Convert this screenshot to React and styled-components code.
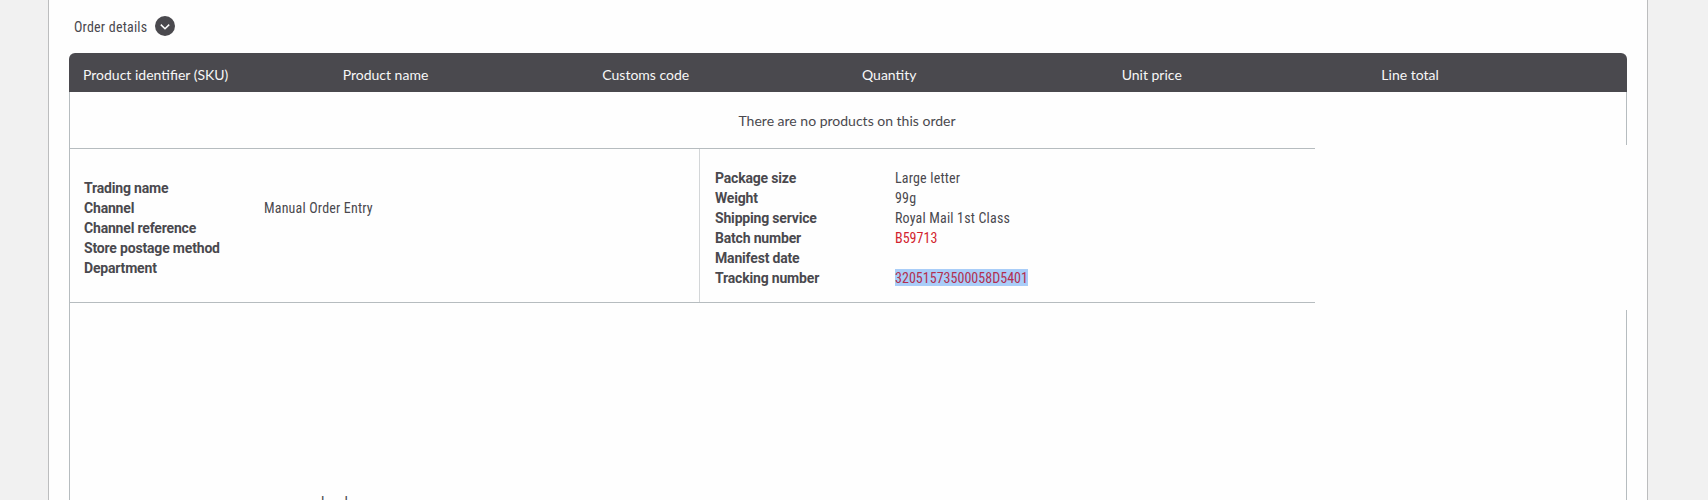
import React, { Component } from 'react';
import styled, { createGlobalStyle } from "styled-components";

const GlobalStyle = createGlobalStyle`
    body {
        margin: 0;
        background-color: #f1f1f1;
        overflow: hidden;
    }

    * {
        box-sizing: border-box;
    }
`;

const Page = styled.div`
    height: 500px;
    padding: 0 60px 0 48px;
    overflow: hidden;
    font-family: Roboto, "Liberation Sans", sans-serif;
    font-size: 14px;
    line-height: 20px;
    color: #4a494e;
`;

const Card = styled.div`
    height: 100%;
    padding: 16px 20px 0;
    display: flex;
    flex-direction: column;
    background-color: #fefefe;
    border-left: 1px solid #bcbdbe;
    border-right: 1px solid #bcbdbe;
`;

const Heading = styled.div`
    height: 37px;
    padding-left: 5px;
    display: flex;
    align-items: flex-start;
    gap: 8px;
`;

const HeadingText = styled.span`
    width: 73px;
    padding-top: 1px;
    font-stretch: condensed;
    letter-spacing: 0.2px;
    white-space: nowrap;
`;

const ToggleButton = styled.button`
    width: 20px;
    height: 20px;
    padding: 0;
    border: 0;
    border-radius: 50%;
    background-color: #4a494e;

    svg {
        display: block;
    }
`;

const TableHeader = styled.div`
    height: 39px;
    flex: none;
    display: grid;
    grid-template-columns: repeat(6, 1fr);
    border-radius: 6px 6px 0 0;
    background-color: #4a494e;
    color: #f7f7f7;
    font-family: Lato, "Liberation Sans", sans-serif;
`;

const HeaderCell = styled.div`
    padding: 12px 14px 0;
`;

const TableBody = styled.div`
    flex: 1;
    display: flex;
    flex-direction: column;
    border-left: 1px solid #b6bcbf;
`;

const EmptyRow = styled.div`
    height: 53px;
    margin-bottom: 3px;
    padding: 19px 2px 0 0;
    border-right: 1px solid #b6bcbf;
    font-family: Lato, "Liberation Sans", sans-serif;
    text-align: center;
`;

const Details = styled.div`
    width: 1245px;
    height: 155px;
    margin-bottom: 7px;
    display: flex;
    border-top: 1px solid #b6bcbf;
    border-bottom: 1px solid #b6bcbf;
`;

const DetailsColumn = styled.div`
    width: ${props => props.$wide ? '629px' : '616px'};
    padding-top: 5px;
    padding-left: ${props => props.$divided ? '15px' : '14px'};
    display: flex;
    flex-direction: column;
    justify-content: center;
    border-left: ${props => props.$divided ? '1px solid #d3d6d8' : '0'};
`;

const DetailRow = styled.div`
    height: 20px;
    display: grid;
    grid-template-columns: 180px 1fr;
    white-space: nowrap;
`;

const Label = styled.span`
    font-weight: 700;
    letter-spacing: -0.18px;
`;

const Value = styled.span`
    font-stretch: condensed;
    letter-spacing: 0.18px;
`;

const ValueLink = styled.a`
    font-stretch: condensed;
    letter-spacing: 0.03px;
    color: #d2232e;
`;

const Selected = styled.mark`
    padding: 1px 0 0;
    background-color: #a9cdf8;
    color: #b22f50;
`;

const Rest = styled.div`
    flex: 1;
    display: flex;
    flex-direction: column;
    justify-content: flex-end;
    border-right: 1px solid #b6bcbf;
`;

// only the tops of the letters stick out over the bottom edge
const CutOffLine = styled.div`
    height: 4px;
    padding-left: 251px;
    display: flex;
    gap: 20px;
    overflow: hidden;
    line-height: 13px;
`;

const columns = ['Product identifier (SKU)', 'Product name', 'Customs code', 'Quantity', 'Unit price', 'Line total'];

const channelDetails = [
    { label: 'Trading name' },
    { label: 'Channel', value: 'Manual Order Entry' },
    { label: 'Channel reference' },
    { label: 'Store postage method' },
    { label: 'Department' }
];

const shippingDetails = [
    { label: 'Package size', value: 'Large letter' },
    { label: 'Weight', value: '99g' },
    { label: 'Shipping service', value: 'Royal Mail 1st Class' },
    { label: 'Batch number', value: 'B59713', link: true },
    { label: 'Manifest date' },
    { label: 'Tracking number', value: '32051573500058D5401', link: true, selected: true }
];

class OrderDetails extends Component{

    renderValue(row){
        if (row.link) {
            return (
                <ValueLink>
                    {row.selected ? <Selected>{row.value}</Selected> : row.value}
                </ValueLink>
            );
        }
        return <Value>{row.value}</Value>;
    }

    renderRows(rows){
        return rows.map(row => (
            <DetailRow key={row.label}>
                <Label>{row.label}</Label>
                <div>{this.renderValue(row)}</div>
            </DetailRow>
        ));
    }

    render(){
        return(
            <Page>
                <GlobalStyle/>
                <Card>
                    <Heading>
                        <HeadingText>Order details</HeadingText>
                        <ToggleButton>
                            <svg width="20" height="20" viewBox="0 0 20 20">
                                <path d="M5.8 8.6 L10 12.7 L14.2 8.6" fill="none" stroke="#fff" strokeWidth="1.5"/>
                            </svg>
                        </ToggleButton>
                    </Heading>
                    <TableHeader>
                        {columns.map(name => <HeaderCell key={name}>{name}</HeaderCell>)}
                    </TableHeader>
                    <TableBody>
                        <EmptyRow>There are no products on this order</EmptyRow>
                        <Details>
                            <DetailsColumn $wide>{this.renderRows(channelDetails)}</DetailsColumn>
                            <DetailsColumn $divided>{this.renderRows(shippingDetails)}</DetailsColumn>
                        </Details>
                        <Rest>
                            <CutOffLine>
                                <span>l</span>
                                <span>l</span>
                            </CutOffLine>
                        </Rest>
                    </TableBody>
                </Card>
            </Page>
        );
    }
}
export default OrderDetails;
